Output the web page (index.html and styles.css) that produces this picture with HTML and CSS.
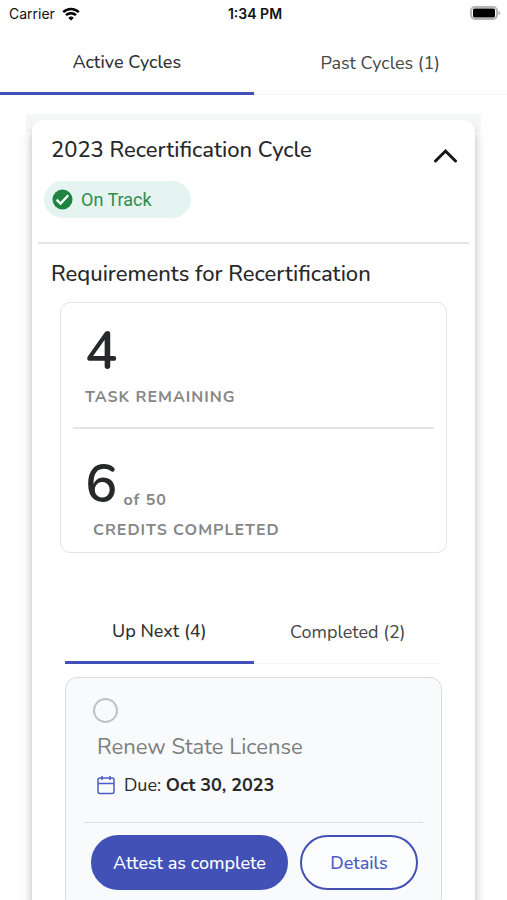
FILE: index.html
```html
<!DOCTYPE html>
<html lang="en">
<head>
<meta charset="utf-8">
<meta name="viewport" content="width=device-width, initial-scale=1">
<title>Recertification Cycles</title>
<link rel="stylesheet" href="styles.css">
</head>
<body>
<header class="status-bar">
  <div class="carrier">
    <span>Carrier</span>
    <svg class="wifi" viewBox="0 0 18 14" aria-hidden="true">
      <path d="M1.2 5.2a11.2 11.2 0 0 1 15.600 0" />
      <path d="M4 8.200a7.200 7.200 0 0 1 10 0" />
      <path class="wifi-dot" d="M9 13.600 6.300 10.900a3.900 3.900 0 0 1 5.400 0z" />
    </svg>
  </div>
  <time class="clock">1:34 PM</time>
  <svg class="battery" viewBox="0 0 31 15" aria-hidden="true">
    <rect class="battery-shell" x="1" y="1" width="26" height="12" rx="4" />
    <rect x="3" y="2.500" width="22" height="9" rx="1.500" />
    <path class="battery-cap" d="M28.500 5v4q2-.5 2-2t-2-2z" />
  </svg>
</header>

<nav class="tabs">
  <button class="tab active" type="button">Active Cycles</button>
  <button class="tab" type="button">Past Cycles (1)</button>
</nav>

<main class="content">
  <section class="cycle">
    <div class="cycle-head">
      <div>
        <h1 class="heading">2023 Recertification Cycle</h1>
        <div class="chip">
          <svg class="check" viewBox="0 0 22 22" aria-hidden="true">
            <circle cx="11" cy="11" r="10.500" />
            <path d="M4.800 11.200 9 15.200l8-8.600" />
          </svg>
          <span>On Track</span>
        </div>
      </div>
      <button class="toggle" type="button" aria-label="Collapse cycle">
        <svg class="chevron" viewBox="0 0 24 16" aria-hidden="true"><path d="M2.500 13 12.500 3l10 10" /></svg>
      </button>
    </div>

    <div class="cycle-body">
      <h2 class="heading">Requirements for Recertification</h2>
      <div class="stats">
        <div class="stat">
          <div class="figure"><span class="number">4</span></div>
          <div class="label">TASK REMAINING</div>
        </div>
        <div class="stat stat-credits">
          <div class="figure"><span class="number">6</span><span class="label total">of 50</span></div>
          <div class="label indent">CREDITS COMPLETED</div>
        </div>
      </div>

      <div class="tasks">
        <nav class="tabs">
          <button class="tab active" type="button">Up Next (4)</button>
          <button class="tab" type="button">Completed (2)</button>
        </nav>
        <article class="task">
          <input class="task-done" type="radio" aria-label="Renew State License">
          <h3 class="task-title">Renew State License</h3>
          <p class="due">
            <svg class="calendar" viewBox="0 0 18 20" aria-hidden="true">
              <rect x="1" y="3" width="16" height="15.500" rx="2" />
              <path d="M1 8.500h16M5 1v4M13 1v4" />
            </svg>
            <span>Due: <strong>Oct 30, 2023</strong></span>
          </p>
          <div class="actions">
            <button class="button primary" type="button">Attest as complete</button>
            <button class="button secondary" type="button">Details</button>
          </div>
        </article>
      </div>
    </div>
  </section>
</main>
</body>
</html>
```

FILE: styles.css
```css
* {
  box-sizing: border-box;
}

html {
  scrollbar-width: none;
}

body {
  margin: 0;
  background: #fefefe;
  color: #262829;
  font-family: Nunito, Lato, sans-serif;
  font-size: 18px;
  line-height: 24px;
}

h1, h2, h3, p {
  margin: 0;
}

button {
  font: inherit;
  color: inherit;
  cursor: pointer;
}

.status-bar {
  display: grid;
  grid-template-columns: 1fr auto 1fr;
  align-items: center;
  height: 27px;
  padding: 0 6px 0 9px;
  font-family: Inter, sans-serif;
  font-size: 14px;
  color: #111;
}

.carrier {
  display: flex;
  align-items: center;
  gap: 7px;
}

.wifi {
  width: 18px;
  height: 14px;
  fill: none;
  stroke: #000;
  stroke-width: 2.5;
}

.wifi-dot {
  fill: #000;
  stroke: none;
}

.clock {
  font-weight: 600;
}

.battery {
  justify-self: end;
  width: 31px;
  height: 15px;
}

.battery-shell {
  fill: #fff;
  stroke: #b4b4b4;
  stroke-width: 2;
}

.battery-cap {
  fill: #b4b4b4;
}

.tabs {
  display: grid;
  grid-template-columns: 1fr 1fr;
}

.tab {
  height: 68px;
  padding: 4px 0 0;
  border: 0;
  border-bottom: 1px solid #f5f5f6;
  background: none;
  color: #444647;
}

.tab.active {
  border-bottom: 3px solid #4251b5;
  color: #303233;
  font-weight: 500;
}

.content {
  margin: 19px 26px 0;
  padding: 6px 6px 32px;
  background: linear-gradient(#f5f6f6, #f5f6f6) top / 100% 18px no-repeat;
}

.cycle {
  border-radius: 12px;
  background: #fff;
  box-shadow: 0 8px 8px 1px rgba(0, 0, 0, 0.24);
}

.cycle-head {
  display: flex;
  justify-content: space-between;
  align-items: flex-start;
  margin: 0 6px;
  padding: 16px 12px 24px;
  border-bottom: 2px solid #e3e4e5;
}

.heading {
  font-size: 22px;
  line-height: 28px;
  font-weight: 500;
}

.cycle-head .heading {
  padding-left: 1px;
}

.chip {
  display: flex;
  align-items: center;
  gap: 8px;
  width: 147px;
  height: 37px;
  margin: 17px 0 0 -6px;
  padding-left: 8px;
  border-radius: 19px;
  background: #e5f4f0;
  color: #2f8c50;
  font-family: Roboto, sans-serif;
  font-size: 18px;
}

.check {
  width: 21px;
  height: 21px;
  fill: #1f8442;
}

.check path {
  fill: none;
  stroke: #fff;
  stroke-width: 2.5;
}

.toggle {
  margin-top: 12px;
  padding: 0;
  border: 0;
  background: none;
}

.chevron {
  display: block;
  width: 24px;
  height: 16px;
  fill: none;
  stroke: #151515;
  stroke-width: 3;
  stroke-linecap: round;
}

.cycle-body {
  padding: 16px 28px 40px;
}

.cycle-body > .heading {
  margin-left: -9px;
}

.stats {
  padding: 0 12px;
  border: 1px solid #e3e4e5;
  border-radius: 10px;
}

.cycle-body > .stats {
  margin-top: 14px;
}

.stat {
  padding: 16px 12px;
}

.stat + .stat {
  padding-bottom: 8px;
  border-top: 2px solid #e3e4e5;
}

.figure {
  display: flex;
  align-items: flex-end;
  gap: 6px;
  height: 64px;
}

.stat-credits .figure {
  margin-top: 7px;
}

.number {
  font-size: 54px;
  line-height: 64px;
  font-weight: 600;
}

.label {
  color: #868788;
  font-size: 16px;
  line-height: 28px;
  font-weight: 700;
  letter-spacing: 1px;
}

.total {
  line-height: 32px;
}

.indent {
  padding-left: 8px;
}

.tasks {
  margin-top: 43px;
  padding: 0 5px;
}

.task {
  margin-top: 13px;
  padding: 20px 18px;
  border: 1px solid #d9dcdd;
  border-radius: 12px;
  background: #f8fafb;
}

.task-done {
  display: block;
  appearance: none;
  width: 25px;
  height: 25px;
  margin: 0 0 0 9px;
  border: 2px solid #c0c2c3;
  border-radius: 50%;
}

.task-title {
  margin: 8px 0 0 13px;
  color: #7c7e80;
  font-size: 22px;
  line-height: 32px;
  font-weight: 400;
}

.due {
  display: flex;
  align-items: center;
  gap: 9px;
  padding: 10px 13px 25px;
  border-bottom: 1px solid #dcdedf;
}

.calendar {
  width: 18px;
  height: 20px;
  fill: none;
  stroke: #4d5bc6;
  stroke-width: 1.5;
}

.actions {
  display: grid;
  grid-template-columns: 5fr 3fr;
  gap: 12px;
  padding: 12px 5px 0 7px;
}

.button {
  height: 55px;
  padding: 0;
  border: 2px solid #4251b5;
  border-radius: 28px;
  font-weight: 500;
}

.primary {
  background: #4251b5;
  color: #fff;
}

.secondary {
  background: #fcfdfe;
  color: #4b5ac0;
}
```
